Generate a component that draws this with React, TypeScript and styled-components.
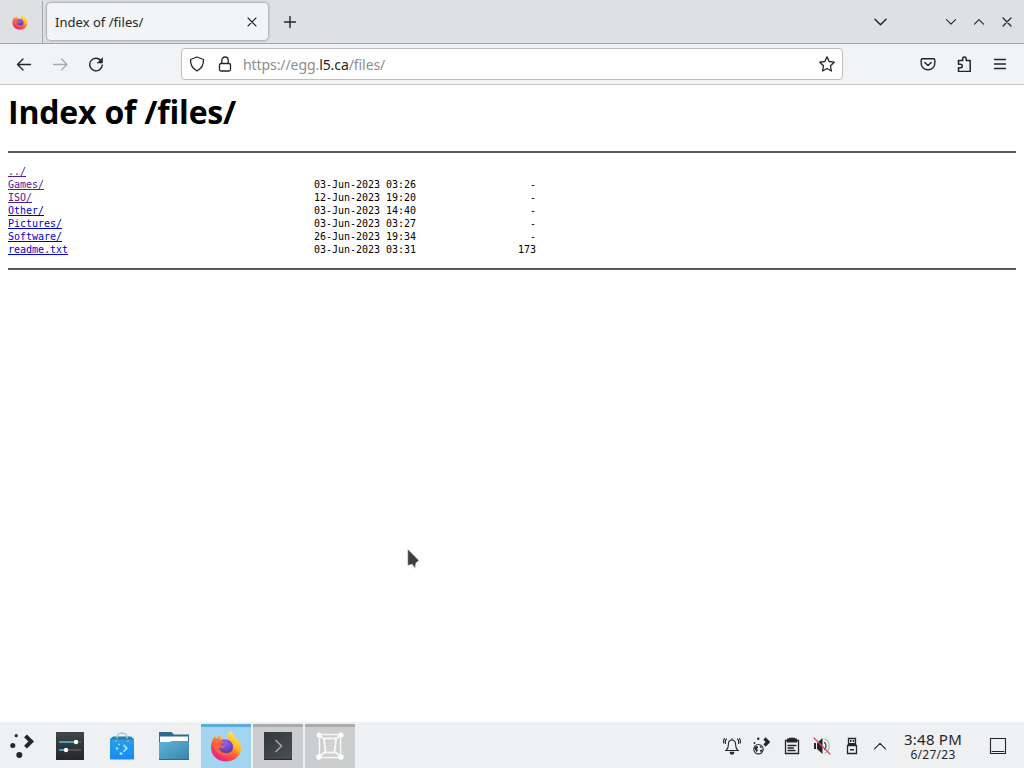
import type { ReactNode } from "react";
import styled, { createGlobalStyle } from "styled-components";

const GlobalStyle = createGlobalStyle`
  body {
    margin: 0;
    background: #fff;
    overflow: hidden;
  }
`;

const Desktop = styled.div`
  position: relative;
  display: flex;
  flex-direction: column;
  width: 1024px;
  height: 768px;
  overflow: hidden;
  background: #fff;
  color: #232629;
  font-family: "Noto Sans", "Open Sans", sans-serif;
`;

const TabStrip = styled.div`
  display: flex;
  flex: none;
  box-sizing: border-box;
  height: 44px;
  padding-top: 1px;
  background: #dee0e2;
  border-bottom: 1px solid #a2a4a6;
`;

const PinnedTab = styled.div`
  display: flex;
  align-items: center;
  box-sizing: border-box;
  width: 43px;
  padding-left: 12px;
  border-right: 1px solid #a5a7a9;
`;

const ActiveTab = styled.div`
  display: flex;
  align-items: center;
  justify-content: space-between;
  box-sizing: border-box;
  width: 221px;
  height: 37px;
  margin: 2px 3px 0 4px;
  padding: 0 8px;
  border-radius: 4px;
  background: #f3f4f5;
  box-shadow: 0 0 3px rgba(0, 0, 0, 0.5);
`;

const TabTitle = styled.span`
  font-size: 13px;
  line-height: 18px;
  letter-spacing: 0.03px;
`;

const StripButton = styled.div<{ $width?: number }>`
  display: flex;
  align-items: center;
  justify-content: center;
  width: ${(p) => p.$width ?? 28}px;
  height: 42px;
`;

const Spacer = styled.div`
  flex: 1;
`;

const NavBar = styled.div`
  display: flex;
  flex: none;
  align-items: center;
  box-sizing: border-box;
  height: 41px;
  padding: 0 6px;
  background: #f2f3f5;
  border-bottom: 1px solid #c6c8ca;
`;

const NavButton = styled.div<{ $muted?: boolean }>`
  display: flex;
  align-items: center;
  justify-content: center;
  width: 36px;
  height: 32px;
  color: ${(p) => (p.$muted ? "#a8abae" : "#232629")};
`;

const UrlBar = styled.div`
  display: flex;
  align-items: center;
  box-sizing: border-box;
  width: 662px;
  height: 32px;
  margin: 0 67px;
  padding: 0 7px;
  border: 1px solid #bcbec0;
  border-radius: 4px;
  background: #fff;
`;

const UrlIcon = styled.span`
  display: flex;
  width: 16px;
  margin-right: 12px;
`;

const Url = styled.span`
  flex: 1;
  margin-left: -2px;
  padding-top: 2px;
  color: #8c8e90;
  font-size: 14px;
  line-height: 20px;
  letter-spacing: -0.08px;
`;

const Host = styled.span`
  color: #232629;
`;

const Page = styled.main`
  flex: 1;
  padding: 0 8px;
  color: #000;
`;

const Heading = styled.h1`
  height: 66px;
  margin: 0;
  font-family: "Open Sans", "Noto Sans", sans-serif;
  font-size: 32px;
  line-height: 54px;
  letter-spacing: -0.2px;
  white-space: nowrap;
`;

const Rule = styled.hr`
  height: 2px;
  margin: 0;
  border: 0;
  background: #5a5a5c;
`;

const Listing = styled.div`
  height: 91px;
  padding: 12px 0;
  font-family: "DejaVu Sans Mono", "Liberation Mono", monospace;
  font-size: 10px;
  line-height: 13px;
  letter-spacing: -0.02px;
`;

const Entry = styled.div`
  display: grid;
  grid-template-columns: 306px 102px 120px;
  height: 13px;
  white-space: nowrap;
`;

const EntryLink = styled.a<{ $visited: boolean }>`
  justify-self: start;
  color: ${(p) => (p.$visited ? "#551a8b" : "#0000d0")};
  text-decoration: underline;
`;

const Size = styled.span`
  text-align: right;
`;

const Pointer = styled.svg`
  position: absolute;
  left: 407px;
  top: 548px;
`;

const Panel = styled.footer`
  display: flex;
  flex: none;
  gap: 2px;
  box-sizing: border-box;
  height: 46px;
  background: #eff0f2;
`;

const Launcher = styled.div`
  display: flex;
  align-items: center;
  justify-content: center;
  width: 43px;
  padding-top: 2px;
`;

const Task = styled.div<{ $state?: "active" | "open" }>`
  display: flex;
  align-items: center;
  justify-content: center;
  box-sizing: border-box;
  width: 50px;
  height: 44px;
  margin-top: 2px;
  border-top: 3px solid
    ${(p) => (p.$state === "active" ? "#5aaedc" : p.$state ? "#a9abac" : "transparent")};
  background: ${(p) =>
    p.$state === "active" ? "#a3d5f0" : p.$state ? "#cccdce" : "transparent"};

  svg {
    margin-top: -3px;
  }
`;

const Tray = styled.div`
  display: flex;
  margin-right: 1px;
`;

const TrayItem = styled.div<{ $width?: number }>`
  display: flex;
  align-items: center;
  justify-content: center;
  width: ${(p) => p.$width ?? 30}px;
  padding-top: 2px;
`;

const Clock = styled.div`
  display: flex;
  flex-direction: column;
  align-items: center;
  width: 80px;
  padding-top: 9px;
`;

const Time = styled.span`
  font-size: 15px;
  line-height: 17px;
  letter-spacing: 0.25px;
`;

const DateText = styled.span`
  font-size: 12px;
  line-height: 14px;
  letter-spacing: 0.25px;
`;

type LineIconProps = {
  size?: number;
  stroke?: number;
  children: ReactNode;
};

const LineIcon = ({ size = 16, stroke = 1.3, children }: LineIconProps) => (
  <svg
    width={size}
    height={size}
    viewBox={`0 0 ${size} ${size}`}
    fill="none"
    stroke="currentColor"
    strokeWidth={stroke}
    strokeLinecap="round"
    strokeLinejoin="round"
  >
    {children}
  </svg>
);

const FirefoxIcon = ({ size, id }: { size: number; id: string }) => (
  <svg width={size} height={size} viewBox="0 0 32 32">
    <defs>
      <linearGradient id={`${id}-body`} x1="0.85" y1="0.1" x2="0.25" y2="0.95">
        <stop offset="0" stopColor="#fff04a" />
        <stop offset="0.35" stopColor="#ffb526" />
        <stop offset="0.62" stopColor="#ff5b36" />
        <stop offset="1" stopColor="#e7218c" />
      </linearGradient>
      <radialGradient id={`${id}-globe`} cx="0.5" cy="0.25" r="0.75">
        <stop offset="0" stopColor="#a25cf5" />
        <stop offset="1" stopColor="#483aa8" />
      </radialGradient>
    </defs>
    <path
      d="M20 .8c2.400 2 3.500 4.200 4 6.200 4.400 2.400 7 6.500 7 11.200C31 26 24.300 31.500 16 31.500S1 25.400 1 17.500c0-4.500 1.600-8.500 4.100-11.500.1 1.500.6 2.500 1.200 3.100 1.100-2 2.700-3.500 4.600-4.200-.5 1.500-.1 3 .8 4 2.100-.3 4.300.5 5.600 1.900.2-4 .5-7 2.700-10Z"
      fill={`url(#${id}-body)`}
    />
    <path
      d="M8 14c1.200-3.300 4.300-4.900 7.800-4.500 4.400.4 7.300 3.500 7.200 7.500-.1 4.200-3.300 7.100-7.400 7.100-4.300 0-8-3.200-8-7.600 0-.9.100-1.800.4-2.500Z"
      fill={`url(#${id}-globe)`}
    />
    <path
      d="M3.500 10.500C5.500 8.200 8.300 8.700 9.500 10c1.500-.2 3.500.5 4.300 1.700-.5 1.600-2.500 1.600-3 2.900.8 1.700 2.500 1.400 4.200 1.600-1.200 2.400-4 2.700-6 1.500 1.500 6 10.500 7.300 15.100 1.200-.6 7.200-11.500 9.700-16.700 3.200C3.800 18.500 2.500 14.500 3.500 10.500Z"
      fill="#ff6a38"
      fillOpacity="0.8"
    />
  </svg>
);

const PlasmaIcon = () => (
  <svg width="26" height="26" viewBox="0 0 26 26">
    <g fill="#232629">
      <circle cx="7.200" cy="2.700" r="1.600" />
      <circle cx="3.800" cy="12.500" r="2.500" />
      <circle cx="10.300" cy="22" r="3" />
    </g>
    <path d="m16.500 2.800 5.700 5.700-5.700 5.700" fill="none" stroke="#232629" strokeWidth="4" />
  </svg>
);

const SettingsIcon = () => (
  <svg width="28" height="28" viewBox="0 0 28 28">
    <defs>
      <linearGradient id="settings" x2="0" y2="1">
        <stop stopColor="#404547" />
        <stop offset="1" stopColor="#24282a" />
      </linearGradient>
    </defs>
    <path d="M0 0h28v28H0Z" fill="url(#settings)" />
    <path d="M3 10h22M3 18h22" stroke="#596166" strokeWidth="1.500" />
    <path d="M3 10h15M3 18h5" stroke="#51b8df" strokeWidth="1.500" />
    <circle cx="20" cy="10" r="2.200" fill="#fff" />
    <circle cx="10" cy="18" r="2.200" fill="#fff" />
  </svg>
);

const DiscoverIcon = () => (
  <svg width="28" height="28" viewBox="0 0 28 28">
    <defs>
      <linearGradient id="bag" x2="0" y2="1">
        <stop stopColor="#2a9fe8" />
        <stop offset="1" stopColor="#168bf6" />
      </linearGradient>
    </defs>
    <path d="M2 6.500h24v21H2Z" fill="url(#bag)" />
    <path d="M5 4.500h18l3 3H2Z" fill="#287daf" />
    <path d="M9 6.500V5.500a5 4.500 0 0 1 10 0v1" fill="none" stroke="#95c9d3" strokeWidth="1.600" />
    <g fill="#9fe5ff">
      <circle cx="11" cy="12.500" r="0.900" />
      <circle cx="9" cy="16.500" r="1.300" />
      <circle cx="13" cy="21.500" r="1.500" />
      <circle cx="8" cy="9" r="0.700" />
      <circle cx="20" cy="9" r="0.700" />
    </g>
    <path d="m15.500 13 3.300 3.300-3.300 3.300" fill="none" stroke="#9fe5ff" strokeWidth="1.800" />
  </svg>
);

const FolderIcon = () => (
  <svg width="30" height="28" viewBox="0 0 30 28">
    <defs>
      <linearGradient id="folder" x2="1" y2="1">
        <stop stopColor="#63b3d8" />
        <stop offset="1" stopColor="#3684ae" />
      </linearGradient>
    </defs>
    <path d="M0 0h12.500L15 2.500h15V17H0Z" fill="#2c6d8e" />
    <path d="M1 4.500h28v8H1Z" fill="#fff" />
    <path d="M0 10h10.500l2-1H30v19H0Z" fill="url(#folder)" />
    <path d="M0 27.500h30" stroke="#2b6d90" />
  </svg>
);

const KonsoleIcon = () => (
  <svg width="28" height="28" viewBox="0 0 28 28">
    <defs>
      <linearGradient id="konsole" x2="1" y2="1">
        <stop stopColor="#31383b" />
        <stop offset="1" stopColor="#4a5052" />
      </linearGradient>
    </defs>
    <path d="M0 0h28v28H0Z" fill="url(#konsole)" />
    <path d="M0 27.500h28" stroke="#25292b" />
    <path d="m11.500 8 6 6-6 6" fill="none" stroke="#a5abad" strokeWidth="1.500" />
  </svg>
);

const WaylandIcon = () => (
  <svg width="28" height="28" viewBox="0 0 28 28" fill="none" stroke="#f7f7f7">
    <path d="M3 2.500h22M3 25.500h22M3.500 3v22M24.500 3v22" strokeWidth="1.500" />
    <path d="M8 6.500h12l-1.500 14h-9ZM3 3l5 4M25 3l-5 4M3 25l6-5M25 25l-6-5" strokeWidth="2" />
    <path d="M11 11h6M11 14h6M11 17h6" stroke="#dedfe0" />
    <g fill="#fff" stroke="none">
      <circle cx="3" cy="3" r="2.500" />
      <circle cx="25" cy="3" r="2.500" />
      <circle cx="3" cy="25" r="2.700" />
      <circle cx="25" cy="25" r="2.700" />
    </g>
  </svg>
);

const entries = [
  { name: "../", visited: true },
  { name: "Games/", date: "03-Jun-2023 03:26", size: "-", visited: true },
  { name: "ISO/", date: "12-Jun-2023 19:20", size: "-", visited: true },
  { name: "Other/", date: "03-Jun-2023 14:40", size: "-", visited: false },
  { name: "Pictures/", date: "03-Jun-2023 03:27", size: "-", visited: false },
  { name: "Software/", date: "26-Jun-2023 19:34", size: "-", visited: false },
  { name: "readme.txt", date: "03-Jun-2023 03:31", size: "173", visited: false },
];

const BrowserTabs = () => (
  <TabStrip>
    <PinnedTab>
      <FirefoxIcon size={16} id="pinned" />
    </PinnedTab>
    <ActiveTab>
      <TabTitle>Index of /files/</TabTitle>
      <LineIcon stroke={1.1}>
        <path d="m4 4 8 8M12 4l-8 8" />
      </LineIcon>
    </ActiveTab>
    <StripButton $width={37}>
      <LineIcon stroke={1.4}>
        <path d="M8 2.500v11M2.500 8h11" />
      </LineIcon>
    </StripButton>
    <Spacer />
    <StripButton $width={57}>
      <LineIcon stroke={1.5}>
        <path d="m2 5.200 5.500 5.500 5.500-5.500" />
      </LineIcon>
    </StripButton>
    <StripButton />
    <StripButton>
      <LineIcon stroke={1.1}>
        <path d="m3.500 5.700 4.500 4.500 4.500-4.500" />
      </LineIcon>
    </StripButton>
    <StripButton>
      <LineIcon stroke={1.1}>
        <path d="m3.500 10.200 4.500-4.500 4.500 4.500" />
      </LineIcon>
    </StripButton>
    <StripButton>
      <LineIcon stroke={1.2}>
        <path d="m4 4 8 8M12 4l-8 8" />
      </LineIcon>
    </StripButton>
    <StripButton $width={3} />
  </TabStrip>
);

const BrowserToolbar = () => (
  <NavBar>
    <NavButton>
      <LineIcon stroke={1.4}>
        <path d="M14.500 8.500h-13M7 3 1.500 8.500 7 14" />
      </LineIcon>
    </NavButton>
    <NavButton $muted>
      <LineIcon>
        <path d="M1.500 8.500h13.500M9.500 3l5.500 5.500L9.500 14" />
      </LineIcon>
    </NavButton>
    <NavButton>
      <LineIcon stroke={1.4}>
        <path d="M13.200 5A6.300 6.300 0 1 0 14.300 9" />
        <path d="M14.500 2v5h-5Z" fill="currentColor" strokeWidth="0.600" />
      </LineIcon>
    </NavButton>
    <UrlBar>
      <UrlIcon>
        <LineIcon>
          <path d="M8 1 14.500 3.500c.2 5-1.800 9-6.500 11.500C3.300 12.500 1.300 8.500 1.500 3.500Z" />
        </LineIcon>
      </UrlIcon>
      <UrlIcon>
        <LineIcon>
          <rect x="2.500" y="7.500" width="11" height="7.500" rx="1.500" />
          <path d="M4.800 7.300V4.200a3.200 3.200 0 0 1 6.400 0v3.100" />
        </LineIcon>
      </UrlIcon>
      <Url>
        https://egg.<Host>l5.ca</Host>/files/
      </Url>
      <LineIcon>
        <path d="m8 .9 2.200 4.600 5 .7-3.700 3.600.9 5.200L8 12.500 3.600 15l.9-5.200L.8 6.200l5-.7Z" />
      </LineIcon>
    </UrlBar>
    <NavButton>
      <LineIcon stroke={1.4}>
        <path d="M2.500 2.700h11a1.300 1.300 0 0 1 1.300 1.300v3.500a6.800 6.300 0 0 1-13.600 0V4a1.300 1.300 0 0 1 1.300-1.300Z" />
        <path d="m4.800 6.500 3.200 3 3.200-3" />
      </LineIcon>
    </NavButton>
    <NavButton>
      <LineIcon stroke={1.5}>
        <path d="M2.500 4.500h4.200V2.800a1.700 1.700 0 0 1 3.500 0v1.700h4v11H2.500v-3.800h2a1.700 1.700 0 0 0 0-3.500h-2Z" />
      </LineIcon>
    </NavButton>
    <NavButton>
      <LineIcon stroke={1.3}>
        <path d="M2.500 3.500h11M2.500 8h11M2.500 12.500h11" />
      </LineIcon>
    </NavButton>
  </NavBar>
);

const SystemTray = () => (
  <Tray>
    <TrayItem>
      <LineIcon size={18} stroke={1.1}>
        <path d="M2.500 13.500h13M3.500 13c1.700-1.700 2-3.500 2-6.500a3.500 3.500 0 0 1 7 0c0 3 .3 4.800 2 6.500M9 3V1.500M3.500 2C2.200 3 2 4.500 2.500 6.500M1.500 1.500C.4 3 .3 4.500.8 6M14.500 2c1.300 1 1.500 2.500 1 4.500M16.500 1.500c1.100 1.500 1.200 3 .7 4.500" />
        <path d="M7.200 15.200h3.600L10 17H8Z" fill="currentColor" />
      </LineIcon>
    </TrayItem>
    <TrayItem>
      <LineIcon size={18} stroke={1.1}>
        <circle cx="5.500" cy="12.200" r="4.700" />
        <path
          d="M1.300 10.500c2-2 3.500-1.500 4-.2L4 11.500l1 1.800-1.700 2ZM6.800 8.500l2.300 2-2 .5ZM6.800 13.300l3-1L8 15.800Z"
          fill="currentColor"
          stroke="none"
        />
        <path d="m11.500 1.500 3.500 3.500-3.500 3.500" strokeWidth="3.200" strokeLinecap="butt" strokeLinejoin="miter" />
        <g fill="currentColor" stroke="none">
          <circle cx="5.300" cy="1.800" r="1.200" />
          <circle cx="1.500" cy="6" r="0.900" />
        </g>
      </LineIcon>
    </TrayItem>
    <TrayItem>
      <LineIcon size={18} stroke={1.3}>
        <path d="M2.500 3.500h13v13h-13ZM5 8.500h8M5 11h5.500M5 13.500h7" strokeLinejoin="miter" />
        <path d="M4 1.500h2V.7h6v.8h2v4H4Z" fill="currentColor" stroke="none" />
      </LineIcon>
    </TrayItem>
    <TrayItem>
      <LineIcon size={18} stroke={1.1}>
        <path d="M1 6h2v6H1ZM4 6l5.500-5v16L4 12Z" fill="currentColor" stroke="none" />
        <path d="M11.500 5.500c2 1.500 2 5.500 0 7" />
        <path d="M12 2c5.500 2.500 5.500 11.500 0 14" stroke="#a9abad" />
        <path d="m1 1 16 16" stroke="#d94a61" strokeWidth="1.300" />
      </LineIcon>
    </TrayItem>
    <TrayItem>
      <LineIcon size={18} stroke={1.3}>
        <path d="M5.500 1.500h7v6h-7ZM4.500 8.500h9v8h-9Z" strokeLinejoin="miter" />
        <path
          d="M5 6h8v3H5ZM7 3h1.500v2H7ZM9.800 3h1.500v2H9.800ZM7 12h4v1.500H7Z"
          fill="currentColor"
          stroke="none"
        />
      </LineIcon>
    </TrayItem>
    <TrayItem $width={26}>
      <LineIcon stroke={1.1}>
        <path d="m2.500 10.800 5.500-5.500 5.500 5.500" />
      </LineIcon>
    </TrayItem>
    <Clock>
      <Time>3:48 PM</Time>
      <DateText>6/27/23</DateText>
    </Clock>
    <TrayItem $width={50}>
      <LineIcon size={18} stroke={1.1}>
        <path d="M1.500 1.500h15v15h-15ZM3 14.500h12" strokeLinejoin="miter" />
      </LineIcon>
    </TrayItem>
  </Tray>
);

const App = () => {
  return (
    <>
      <GlobalStyle />
      <Desktop>
        <BrowserTabs />
        <BrowserToolbar />
        <Page>
          <Heading>Index of /files/</Heading>
          <Rule />
          <Listing>
            {entries.map((entry) => (
              <Entry key={entry.name}>
                <EntryLink href="#" $visited={entry.visited}>
                  {entry.name}
                </EntryLink>
                <span>{entry.date}</span>
                <Size>{entry.size}</Size>
              </Entry>
            ))}
          </Listing>
          <Rule />
        </Page>
        <Panel>
          <Launcher>
            <PlasmaIcon />
          </Launcher>
          <Task>
            <SettingsIcon />
          </Task>
          <Task>
            <DiscoverIcon />
          </Task>
          <Task>
            <FolderIcon />
          </Task>
          <Task $state="active">
            <FirefoxIcon size={32} id="task" />
          </Task>
          <Task $state="open">
            <KonsoleIcon />
          </Task>
          <Task $state="open">
            <WaylandIcon />
          </Task>
          <Spacer />
          <SystemTray />
        </Panel>
        <Pointer width="14" height="22" viewBox="0 0 14 22">
          <path
            d="M.7 1v16.500l4.500-1.200L8 20.500l1-5.500 3-2.500Z"
            fill="#3c3e40"
            stroke="#eee"
            strokeWidth="0.600"
          />
        </Pointer>
      </Desktop>
    </>
  );
};

export default App;
